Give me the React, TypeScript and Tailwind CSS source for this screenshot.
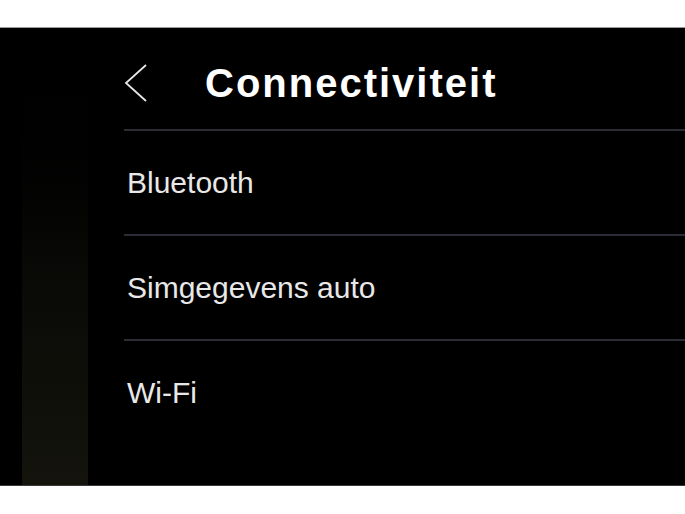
// Connectiviteit settings screen (car display photo)

const items = ["Bluetooth", "Simgegevens auto", "Wi-Fi"];

export default function App() {
  return (
    <div
      className="w-[685px] h-[514px] flex flex-col bg-white overflow-hidden"
      style={{ fontFamily: '"Liberation Sans", Arial, sans-serif' }}
    >
      <div className="h-[28px] bg-white border-b border-[#9a9a9a]" />
      <div className="flex-1 flex bg-black">
        {/* bezel edge */}
        <div className="w-[22px]" />
        <div className="w-[66px] bg-gradient-to-b from-black via-[#080806] to-[#14140d]" />
        <div className="w-[36px]" />

        <div className="flex-1 flex flex-col">
          {/* Header */}
          <div className="h-[101px] flex items-center pt-[8px]">
            <svg width="24" height="40" viewBox="0 0 24 40" className="shrink-0">
              <polyline
                points="22,2 2,20 22,38"
                fill="none"
                stroke="#e6e6e6"
                strokeWidth="1.8"
              />
            </svg>
            <h1 className="ml-[57px] text-[40px] leading-none font-bold tracking-[2px] text-white">
              Connectiviteit
            </h1>
          </div>

          {items.map((label) => (
            <div
              key={label}
              className="h-[105px] flex items-center border-t-2 border-[#2c2c36] pl-[3px]"
            >
              <span className="text-[30px] leading-none text-[#e8e8e8] pt-[1px]">{label}</span>
            </div>
          ))}
        </div>
      </div>
      <div className="h-[29px] bg-white border-t border-[#3a3a3a]" />
    </div>
  );
}
